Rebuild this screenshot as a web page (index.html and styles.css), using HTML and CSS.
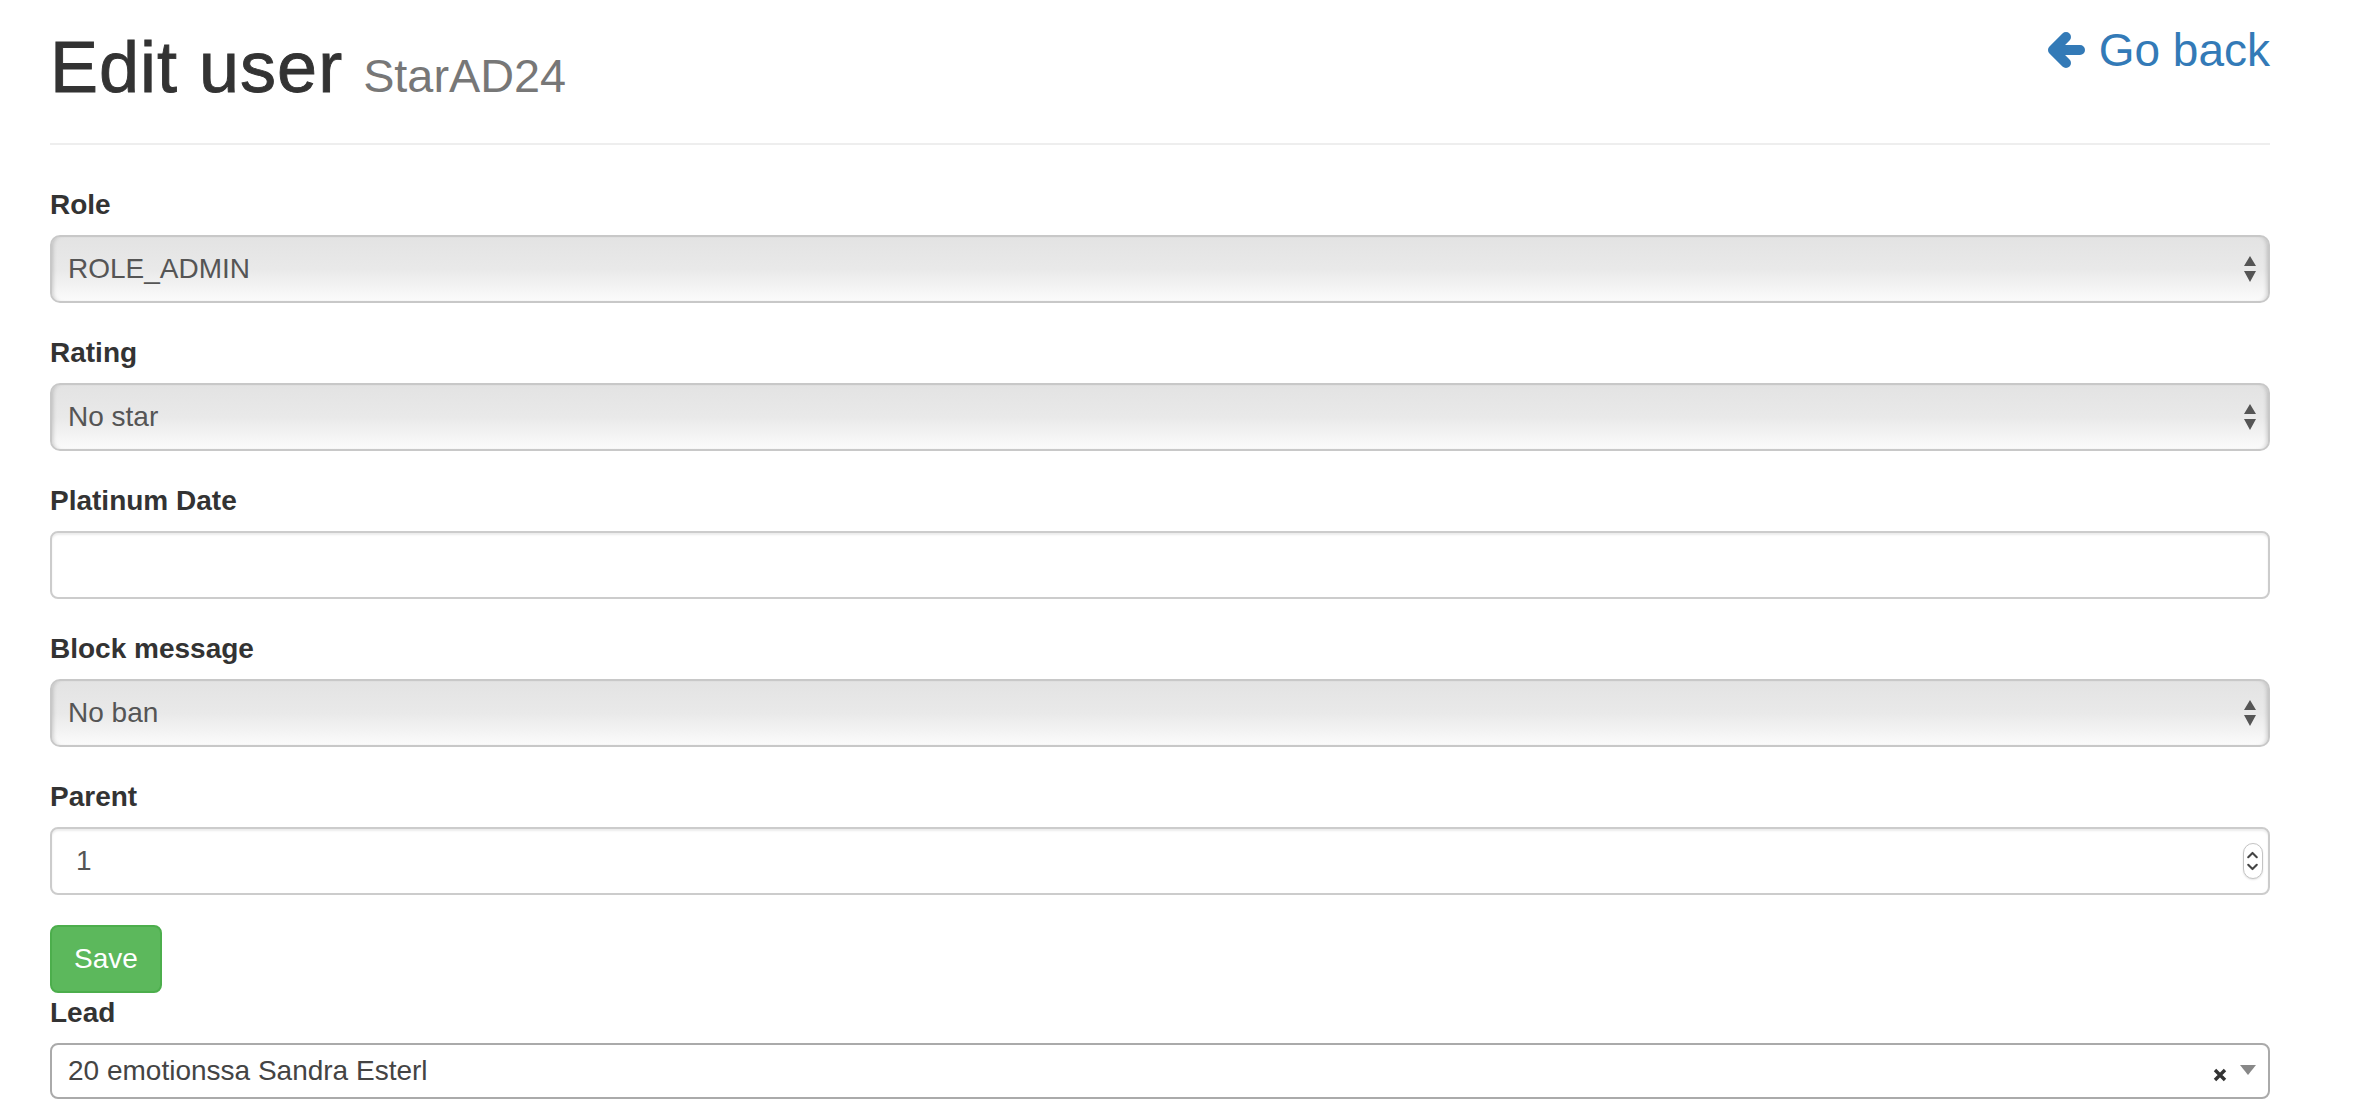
FILE: index.html
```html
<!DOCTYPE html>
<html lang="en">
<head>
    <meta charset="UTF-8">
    <meta name="viewport" content="width=device-width, initial-scale=1.0">
    <title>Edit user</title>
    <link rel="stylesheet" href="styles.css">
</head>
<body>
    <div class="container">
        <div class="page-header">
            <h1><span class="title">Edit user</span> <small>StarAD24</small></h1>
            <a class="back-link" href="#">
                <svg class="back-icon" width="38" height="40" viewBox="0 0 38 40">
                    <path d="M33 20H9M19 7L6 20l13 13" fill="none" stroke="#337ab7" stroke-width="10" stroke-linecap="round" stroke-linejoin="round"/>
                </svg>
                Go back
            </a>
        </div>

        <form>
            <div class="form-group">
                <label>Role</label>
                <div class="select-box">
                    <span>ROLE_ADMIN</span>
                    <svg width="12" height="26" viewBox="0 0 12 26"><path d="M6 0l6 10H0zM0 15h12l-6 11z" fill="#555"/></svg>
                </div>
            </div>
            <div class="form-group">
                <label>Rating</label>
                <div class="select-box">
                    <span>No star</span>
                    <svg width="12" height="26" viewBox="0 0 12 26"><path d="M6 0l6 10H0zM0 15h12l-6 11z" fill="#555"/></svg>
                </div>
            </div>
            <div class="form-group">
                <label>Platinum Date</label>
                <input type="text" class="form-control">
            </div>
            <div class="form-group">
                <label>Block message</label>
                <div class="select-box">
                    <span>No ban</span>
                    <svg width="12" height="26" viewBox="0 0 12 26"><path d="M6 0l6 10H0zM0 15h12l-6 11z" fill="#555"/></svg>
                </div>
            </div>
            <div class="form-group">
                <label>Parent</label>
                <div class="form-control number-field">
                    <input type="text" value="1">
                    <span class="spinner">
                        <svg width="20" height="36" viewBox="0 0 20 36"><path d="M5.5 14l4.5-4.5 4.5 4.5M5.5 22l4.5 4.5 4.5-4.5" fill="none" stroke="#444" stroke-width="2.2" stroke-linecap="round" stroke-linejoin="round"/></svg>
                    </span>
                </div>
            </div>
            <button type="button" class="btn-save">Save</button>

            <label>Lead</label>
            <div class="select2-box">
                <span class="select2-text">20 emotionssa Sandra Esterl</span>
                <svg class="select2-clear" width="14" height="14" viewBox="0 0 14 14"><path d="M2 2l10 10M12 2L2 12" stroke="#333" stroke-width="3.4"/></svg>
                <span class="select2-arrow"><b></b></span>
            </div>
        </form>
    </div>
</body>
</html>
```

FILE: styles.css
```css
body {
    margin: 0;
    font-family: "Liberation Sans", Arial, sans-serif;
    font-size: 28px;
    line-height: 40px;
    color: #333;
}

.container {
    width: 2220px;
    padding: 28px 0 0 50px;
}

.page-header {
    display: flex;
    justify-content: space-between;
    align-items: flex-start;
    padding-bottom: 36px;
    border-bottom: 2px solid #eee;
    margin-bottom: 40px;
}

h1 {
    margin: 0;
    font-size: 72px;
    line-height: 79px;
    font-weight: 500;
    color: #333;
}

/* a touch heavier than regular, like a medium weight */
h1 .title {
    letter-spacing: 1px;
    -webkit-text-stroke: 0.9px #333;
}

h1 small {
    font-size: 46.8px;
    line-height: 1;
    font-weight: 400;
    color: #777;
}

.back-link {
    display: flex;
    align-items: center;
    gap: 14px;
    margin-top: -3px;
    font-size: 46px;
    line-height: 50px;
    color: #337ab7;
    text-decoration: none;
}

.form-group {
    margin-bottom: 30px;
}

label {
    display: block;
    margin-bottom: 10px;
    font-weight: bold;
}

/* native-looking mac select */
.select-box {
    display: flex;
    align-items: center;
    justify-content: space-between;
    height: 68px;
    box-sizing: border-box;
    padding: 0 12px 0 16px;
    border: 2px solid #c8c8c8;
    border-radius: 10px;
    background: linear-gradient(#e3e3e3, #e9e9e9 50%, #fbfbfb);
    box-shadow: inset 4px 0 4px -3px rgba(0, 0, 0, .18), inset -4px 0 4px -3px rgba(0, 0, 0, .18);
    color: #555;
}

.form-control {
    display: block;
    width: 100%;
    height: 68px;
    box-sizing: border-box;
    padding: 0 24px;
    border: 2px solid #ccc;
    border-radius: 8px;
    background: #fff;
    box-shadow: inset 0 2px 2px rgba(0, 0, 0, .075);
    font: inherit;
    color: #555;
}

.number-field {
    display: flex;
    align-items: center;
    padding-right: 5px;
}

.number-field input {
    flex: 1;
    border: none;
    padding: 0;
    background: transparent;
    font: inherit;
    color: #555;
    outline: none;
}

.spinner {
    display: flex;
    width: 20px;
    height: 36px;
    box-sizing: border-box;
    border: 1px solid #c4c4c4;
    border-radius: 10px;
    background: #fff;
    box-shadow: 0 1px 2px rgba(0, 0, 0, .12);
}

.spinner svg {
    margin-left: -1px;
    margin-top: -1px;
}

.btn-save {
    display: block;
    height: 68px;
    margin: 0;
    padding: 0 22px;
    border: 2px solid #4cae4c;
    border-radius: 8px;
    background: #5cb85c;
    color: #fff;
    font-family: inherit;
    font-size: 28px;
    line-height: 40px;
}

.select2-box {
    display: flex;
    align-items: center;
    height: 56px;
    box-sizing: border-box;
    padding-left: 16px;
    border: 2px solid #aaa;
    border-radius: 8px;
    background: #fff;
    color: #444;
}

.select2-text {
    flex: 1;
}

.select2-clear {
    margin-top: 8px;
    margin-right: 1px;
}

.select2-arrow {
    display: flex;
    justify-content: center;
    width: 40px;
    padding-bottom: 2px;
}

.select2-arrow b {
    width: 0;
    height: 0;
    border-style: solid;
    border-width: 10px 8px 0 8px;
    border-color: #888 transparent transparent transparent;
}
```
